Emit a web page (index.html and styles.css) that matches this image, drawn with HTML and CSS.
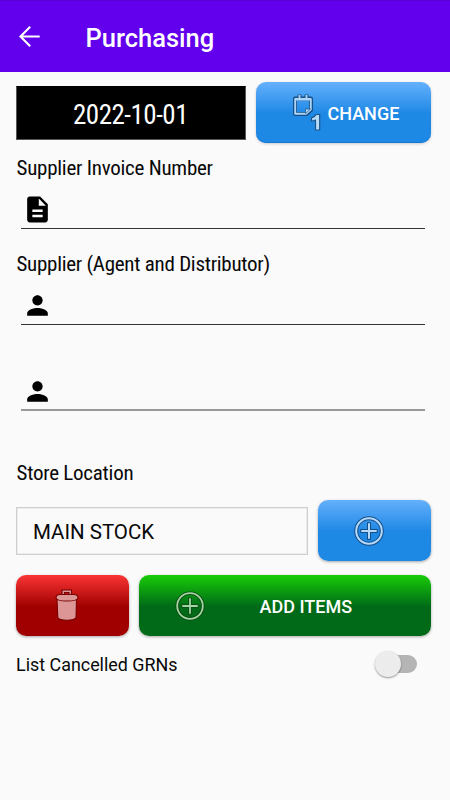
FILE: index.html
```html
<!DOCTYPE html>
<html lang="en">
<head>
<meta charset="utf-8">
<title>Purchasing</title>
<link rel="stylesheet" href="styles.css">
</head>
<body>
<header class="bar">
  <svg class="back" width="24" height="24" viewBox="0 0 24 24" fill="none" stroke="#fff" stroke-width="2.1"><path d="M21.700 11.500H3M12.200 1.800L2.500 11.500l9.700 9.700"/></svg>
  <h1>Purchasing</h1>
</header>
<main>
  <div class="row date-row">
    <div class="date"><span class="cond">2022-10-01</span></div>
    <button class="btn blue change">
      <svg width="30" height="40" viewBox="0 0 30 40" stroke-linejoin="round">
        <path d="M3 5.500H19V17L14.500 21H3Z" fill="none" stroke="#174f87" stroke-width="4"/>
        <path d="M7.500 1.500V6M14.500 1.500V6" stroke="#174f87" stroke-width="3.800"/>
        <path d="M3.200 6H18.800V16.500L14 20.700H3.200Z" fill="none" stroke="#add5f7" stroke-width="1.900"/>
        <path d="M3 6.500H19M7.500 2V6M14.500 2V6" stroke="#add5f7" stroke-width="1.900"/>
        <path d="M13.500 20.500V16H18.500Z" fill="#add5f7" stroke="#1d568b" stroke-width=".7"/>
        <path d="M24 21.500H27.700V37H23.500V27L19.500 28.200V24.800Q23 24 24 21.500Z" fill="#b6daf8" stroke="#1c558b" stroke-width="1.200"/>
      </svg>
      <span>CHANGE</span>
    </button>
  </div>
  <label class="title invoice"><span class="cond">Supplier Invoice Number</span></label>
  <div class="field"><svg width="31" height="31" viewBox="0 0 24 24"><path d="M14 2H6c-1.100 0-2 .9-2 2v16c0 1.100.9 2 2 2h12c1.100 0 2-.9 2-2V8l-6-6zm2 16H8v-2h8v2zm0-4H8v-2h8v2zm-3-5V3.500L18.500 9H13z"/></svg></div>
  <label class="title supplier"><span class="cond long">Supplier (Agent and Distributor)</span></label>
  <div class="field"><svg width="31" height="31" viewBox="0 0 24 24"><path d="M12 12c2.210 0 4-1.790 4-4s-1.790-4-4-4-4 1.790-4 4 1.790 4 4 4zm0 2c-2.670 0-8 1.340-8 4v2h16v-2c0-2.660-5.330-4-8-4z"/></svg></div>
  <div class="field second"><svg width="31" height="31" viewBox="0 0 24 24"><path d="M12 12c2.210 0 4-1.790 4-4s-1.790-4-4-4-4 1.790-4 4 1.790 4 4 4zm0 2c-2.670 0-8 1.340-8 4v2h16v-2c0-2.660-5.330-4-8-4z"/></svg></div>
  <label class="title store"><span class="cond">Store Location</span></label>
  <div class="row store-row">
    <div class="select">MAIN STOCK</div>
    <button class="btn blue plus" aria-label="Add location">
      <svg width="30" height="30" viewBox="0 0 30 30" fill="none"><g stroke="#174f87" stroke-width="4"><circle cx="15" cy="15" r="12.800"/><path d="M15 6.300V23.700M6.300 15H23.700"/></g><g stroke="#b5dafb" stroke-width="2"><circle cx="15" cy="15" r="12.800"/><path d="M15 7.300V22.700M7.300 15H22.700"/></g></svg>
    </button>
  </div>
  <div class="row action-row">
    <button class="btn red" aria-label="Delete">
      <svg width="26" height="34" viewBox="0 0 26 34" fill="#dc9696" stroke="#700" stroke-width="1.100"><path d="M8 7V2H17.500V7H15V4.500H10.500V7Z"/><path d="M3 11.500H22.500L22 29.500Q21 32.300 12.800 32.300T3.800 29.500Z"/><path d="M2 10Q2 6.500 6 6.500H20Q24 6.500 24 10Q23.500 13 13 13T2 10Z"/></svg>
    </button>
    <button class="btn green">
      <svg width="30" height="30" viewBox="0 0 30 30" fill="none"><g stroke="#084d10" stroke-width="3.600"><circle cx="15" cy="15" r="12.800"/><path d="M15 6.500V23.500M6.500 15H23.500"/></g><g stroke="#a5d3a5" stroke-width="1.800"><circle cx="15" cy="15" r="12.800"/><path d="M15 7.300V22.700M7.300 15H22.700"/></g></svg>
      <span>ADD ITEMS</span>
    </button>
  </div>
  <div class="row list-row"><span>List Cancelled GRNs</span><div class="switch"><i></i></div></div>
</main>
</body>
</html>
```

FILE: styles.css
```css
* { box-sizing: border-box; }
body { margin: 0; height: 800px; background: #fafafa; color: #080808; font-family: Roboto, "Liberation Sans", sans-serif; overflow: hidden; }
.bar { height: 72px; background: #6200ee; border-top: 1px solid #5700d4; display: flex; align-items: center; padding-left: 18px; color: #fff; }
.back { flex: none; }
h1 { margin: 2px 0 0 43.500px; font-size: 25.500px; font-weight: 500; line-height: 32px; }
main { padding: 10px 19.500px 0 16px; }
.row { display: flex; align-items: center; gap: 10px; }
.cond { display: inline-block; font-family: "Roboto Condensed", Roboto, sans-serif; font-stretch: 75%; white-space: nowrap; letter-spacing: -.25px; }
.long { letter-spacing: -.27px; }
.date-row { height: 62px; align-items: flex-start; }
.date { width: 230px; height: 54px; margin-top: 4px; background: #000; border: 1px solid #555; border-top-color: #000; color: #fff; font-size: 27px; display: flex; align-items: center; justify-content: center; padding: 3px 1px 0 0; }
.date .cond { letter-spacing: -.5px; }
.btn { height: 61px; border: 0; border-radius: 10px; padding: 0; font: 500 18px Roboto, sans-serif; color: #fff; display: flex; align-items: center; box-shadow: 0 1px 3px #0005; }
.blue { background: linear-gradient(#64b0fc, #1e88e5 52%); }
.red { background: linear-gradient(#fb3535, #a00000 52%); width: 113px; padding-left: 38px; }
.red svg { margin-bottom: 2px; }
.green { background: linear-gradient(#18cc08, #006a18 52%); flex: 1; padding-left: 36px; }
.green span { margin: 1px 0 0 54.500px; }
.change { flex: 1; padding-left: 36px; box-shadow: inset 0 -1px #1478d8, 0 1px 3px #0003; }
.change span { margin: 2px 0 0 5.500px; }
.title { display: block; height: 24px; line-height: 24px; font-size: 21px; padding-left: .5px; }
.invoice { margin-top: 12px; }
.field { height: 48px; margin: 1px 5.500px 0 5px; border-bottom: 1px solid #333; display: flex; align-items: flex-end; }
.field svg { flex: none; margin: 0 0 3px .5px; }
.field + .title { margin-top: 23px; }
.field.second { height: 86px; margin-top: 0; border-bottom: 2px solid #999; }
.second svg { margin-bottom: 2px; }
.field + .store { margin-top: 50px; }
.store-row { margin-top: 15px; height: 61px; }
.select { width: 292px; height: 48px; border: 1px solid #d0d0d0; box-shadow: inset 0 0 0 .5px #ddd; font-size: 20.500px; line-height: 48px; padding: 0 0 0 16px; }
.plus { flex: 1; padding-left: 36px; }
.action-row { margin-top: 14px; }
.list-row { margin-top: 13px; height: 30px; font-size: 17.900px; justify-content: space-between; padding-right: 14px; }
.switch { width: 36px; height: 18px; border-radius: 9px; background: #b5b5b5; position: relative; }
.switch i { position: absolute; left: -6px; top: -4px; width: 26px; height: 26px; border-radius: 50%; background: #ececec; box-shadow: 0 1px 2px #0006; }
```
